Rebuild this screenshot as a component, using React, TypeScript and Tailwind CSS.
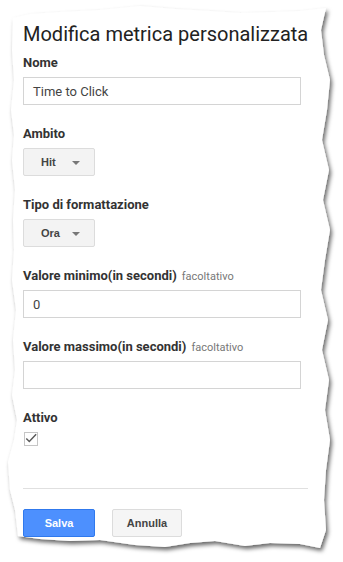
import React from 'react';

const paperPath =
  'M13,18 L30,14 L60,12 L100,10 L140,6 L175,9 L210,11 L240,13 L275,12 L300,11 L326,8 ' +
  'L321,30 L324,55 L330,80 L327,110 L322,140 L329,170 L323,200 L330,230 L325,260 L321,290 L328,320 L322,350 L329,380 L325,410 L330,440 L326,470 L324,500 L326,530 L320,548 ' +
  'L300,544 L270,543 L245,546 L215,541 L190,543 L165,547 L135,545 L100,540 L70,541 L40,539 L18,536 ' +
  'L15,510 L10,490 L8,462 L14,440 L17,420 L12,395 L15,370 L13,340 L16,310 L12,280 L14,250 L13,220 L15,190 L12,160 L14,135 L11,110 L14,80 L12,50 Z';

const Label: React.FC<{ text: string; optional?: boolean }> = ({ text, optional }) => (
  <div className="h-[16px] leading-[16px] text-[13px] font-bold text-[#333] mb-[6px] whitespace-nowrap">
    {text}
    {optional && <span className="ml-[5px] text-[11px] font-normal text-[#777]">facoltativo</span>}
  </div>
);

const TextBox: React.FC<{ value?: string }> = ({ value }) => (
  <div className="w-[278px] h-[28px] border border-[#d4d4d4] bg-white px-[9px] pt-[1px] flex items-center text-[13px] text-[#444]">
    {value}
  </div>
);

const Dropdown: React.FC<{ value: string }> = ({ value }) => (
  <div className="w-[72px] h-[28px] border border-[#dcdcdc] rounded-[2px] bg-[#f3f3f3] flex items-center pl-[17px] text-[11px] font-bold text-[#444] font-['Liberation_Sans',Arial,sans-serif]">
    <span className="w-[30px]">{value}</span>
    <svg width="8" height="4" viewBox="0 0 8 4" className="ml-[1px] mt-[1px]">
      <path d="M0,0 L8,0 L4,4 Z" fill="#777" />
    </svg>
  </div>
);

export default function App() {
  return (
    <div className="relative w-[343px] h-[562px] bg-white overflow-hidden font-['Roboto','Liberation_Sans',Arial,sans-serif]">
      <svg className="absolute inset-0" width="343" height="562" viewBox="0 0 343 562">
        <defs>
          <filter id="tear" x="-10%" y="-10%" width="120%" height="120%">
            <feDropShadow dx="2" dy="3" stdDeviation="2" floodColor="#000" floodOpacity="0.6" />
          </filter>
        </defs>
        <path d={paperPath} fill="#fff" filter="url(#tear)" />
      </svg>

      <div className="relative pl-[23px] pt-[20px] w-[308px]">
        <h1 className="h-[28px] leading-[28px] text-[20px] text-[#222] whitespace-nowrap mb-[7px]">
          Modifica metrica personalizzata
        </h1>

        <div className="flex flex-col gap-[21px]">
          <div>
            <Label text="Nome" />
            <TextBox value="Time to Click" />
          </div>
          <div>
            <Label text="Ambito" />
            <Dropdown value="Hit" />
          </div>
          <div>
            <Label text="Tipo di formattazione" />
            <Dropdown value="Ora" />
          </div>
          <div>
            <Label text="Valore minimo(in secondi)" optional />
            <TextBox value="0" />
          </div>
          <div>
            <Label text="Valore massimo(in secondi)" optional />
            <TextBox />
          </div>
          <div>
            <Label text="Attivo" />
            <div className="ml-[1px] w-[14px] h-[14px] border border-[#c6c6c6] bg-white flex items-center justify-center">
              <svg width="14" height="12" viewBox="0 0 14 12" className="-mt-[2px]">
                <path d="M1.5,6.5 L5,10 L13,1.5" fill="none" stroke="#5a5a5a" strokeWidth="1.7" />
              </svg>
            </div>
          </div>
        </div>

        <div className="mt-[42px] border-t border-[#e0e0e0]" />

        <div className="mt-[20px] flex gap-[17px] font-['Liberation_Sans',Arial,sans-serif] text-[11px] font-bold">
          <button className="w-[72px] h-[28px] rounded-[2px] bg-[#4d90fe] border border-[#3079ed] text-white">
            Salva
          </button>
          <button className="w-[70px] h-[28px] rounded-[2px] bg-[#f5f5f5] border border-[#dcdcdc] text-[#444]">
            Annulla
          </button>
        </div>
      </div>
    </div>
  );
}
